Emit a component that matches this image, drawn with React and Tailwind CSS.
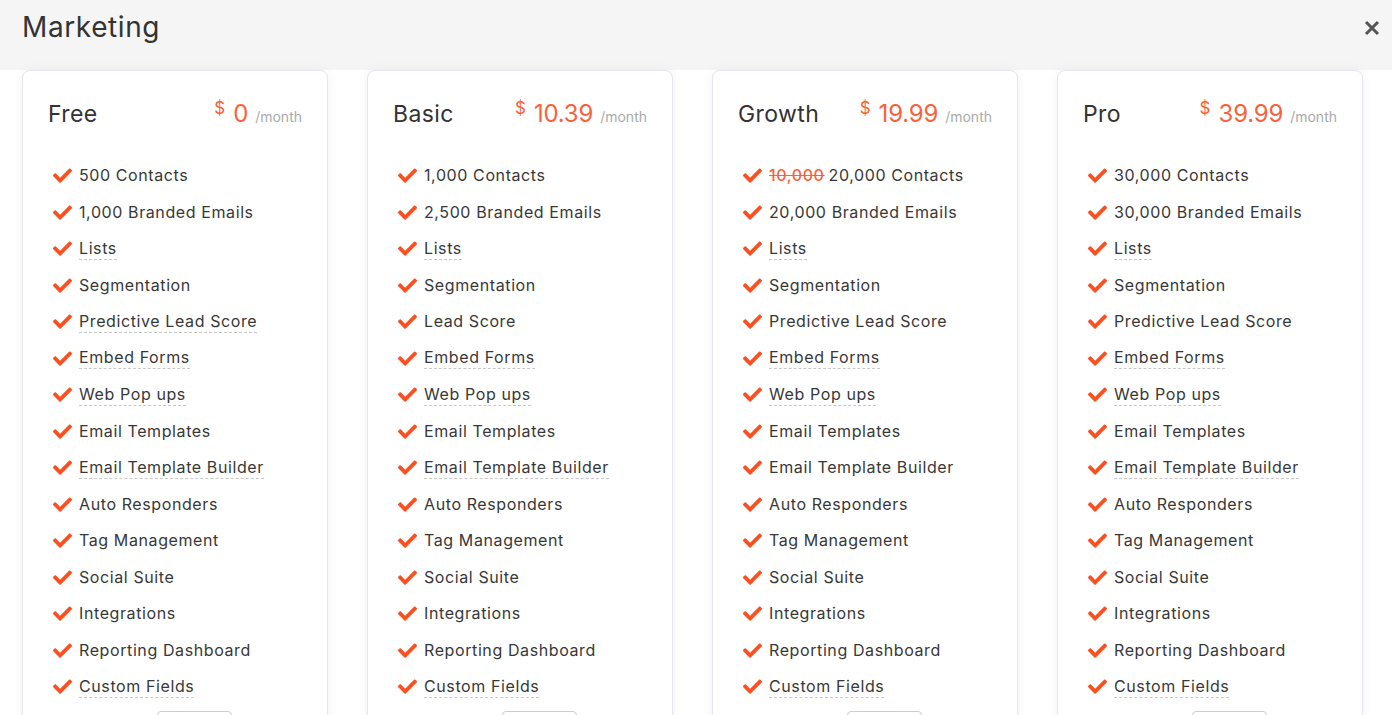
import React from "react";

const plans = [
  {
    name: "Free",
    price: "0",
    items: [
      ["500 Contacts"],
      ["1,000 Branded Emails"],
      ["Lists", true],
      ["Segmentation"],
      ["Predictive Lead Score", true],
      ["Embed Forms", true],
      ["Web Pop ups", true],
      ["Email Templates"],
      ["Email Template Builder", true],
      ["Auto Responders"],
      ["Tag Management"],
      ["Social Suite"],
      ["Integrations"],
      ["Reporting Dashboard"],
      ["Custom Fields", true],
    ],
  },
  {
    name: "Basic",
    price: "10.39",
    items: [
      ["1,000 Contacts"],
      ["2,500 Branded Emails"],
      ["Lists", true],
      ["Segmentation"],
      ["Lead Score"],
      ["Embed Forms", true],
      ["Web Pop ups", true],
      ["Email Templates"],
      ["Email Template Builder", true],
      ["Auto Responders"],
      ["Tag Management"],
      ["Social Suite"],
      ["Integrations"],
      ["Reporting Dashboard"],
      ["Custom Fields", true],
    ],
  },
  {
    name: "Growth",
    price: "19.99",
    items: [
      ["20,000 Contacts", false, "10,000"],
      ["20,000 Branded Emails"],
      ["Lists", true],
      ["Segmentation"],
      ["Predictive Lead Score"],
      ["Embed Forms", true],
      ["Web Pop ups", true],
      ["Email Templates"],
      ["Email Template Builder"],
      ["Auto Responders"],
      ["Tag Management"],
      ["Social Suite"],
      ["Integrations"],
      ["Reporting Dashboard"],
      ["Custom Fields", true],
    ],
  },
  {
    name: "Pro",
    price: "39.99",
    items: [
      ["30,000 Contacts"],
      ["30,000 Branded Emails"],
      ["Lists", true],
      ["Segmentation"],
      ["Predictive Lead Score"],
      ["Embed Forms", true],
      ["Web Pop ups", true],
      ["Email Templates"],
      ["Email Template Builder", true],
      ["Auto Responders"],
      ["Tag Management"],
      ["Social Suite"],
      ["Integrations"],
      ["Reporting Dashboard"],
      ["Custom Fields", true],
    ],
  },
];

function Check() {
  return (
    <svg width="19" height="16" viewBox="0 0 512 420" className="shrink-0">
      <path
        fill="#fc4f1f"
        d="M173.9 409L7.5 242.6c-10-10-10-26.2 0-36.2l36.2-36.2c10-10 26.2-10 36.2 0L192 282.3 432.1 42.2c10-10 26.2-10 36.2 0l36.2 36.2c10 10 10 26.2 0 36.2L210.1 409c-10 10-26.2 10-36.2 0z"
      />
    </svg>
  );
}

function Card({ plan }) {
  return (
    <div className="relative bg-white border border-[#e6e6ee] rounded-lg shadow-[0_0_12px_rgba(0,0,0,0.05)] pt-[25px] h-[700px]">
      <div className="flex items-center justify-between pl-[25px] pr-[25px]">
        <div className="text-[23px] tracking-[0.4px] text-[#333]">{plan.name}</div>
        <div className="flex items-baseline text-[#f9623b]">
          <span className="text-[17px] relative -top-[8px] mr-[8px]">$</span>
          <span className="text-[24px] tracking-[-0.2px]">{plan.price}</span>
          <span className="text-[14px] text-[#aaaaaa] ml-[7px]">/month</span>
        </div>
      </div>
      <ul className="mt-[25px] pl-[30px]">
        {plan.items.map(([t, dashed, strike], i) => (
          <li key={i} className="flex items-center h-[36.5px]">
            <Check />
            <span
              className={
                "ml-[7px] text-[16px] tracking-[0.6px] leading-[22px] text-[#383838] " +
                (dashed ? "border-b border-dashed border-[#c8c8c8]" : "")
              }
            >
              {strike && (
                <span className="line-through text-[#f9623b] font-medium mr-[4px]">{strike}</span>
              )}
              {t}
            </span>
          </li>
        ))}
      </ul>
      <div className="absolute left-[134px] top-[640px] w-[75px] h-[30px] border border-[#ccc] rounded-sm" />
    </div>
  );
}

export default function App() {
  return (
    <div className="w-[1392px] h-[715px] overflow-hidden bg-white" style={{ fontFamily: "Inter, sans-serif" }}>
      <div className="h-[70px] bg-[#f5f5f5] flex items-center justify-between pl-[22px] pr-[12px]">
        <div className="text-[28px] tracking-[0.6px] text-[#333] leading-none -mt-[16px]">Marketing</div>
        <svg width="16" height="16" viewBox="0 0 16 16" className="-mt-[14px]">
          <path d="M2 2 L14 14 M14 2 L2 14" stroke="#555" strokeWidth="3" />
        </svg>
      </div>
      <div className="grid grid-cols-[306px_306px_306px_306px] gap-[39px] pl-[22px]">
        {plans.map((p) => (
          <Card key={p.name} plan={p} />
        ))}
      </div>
    </div>
  );
}
